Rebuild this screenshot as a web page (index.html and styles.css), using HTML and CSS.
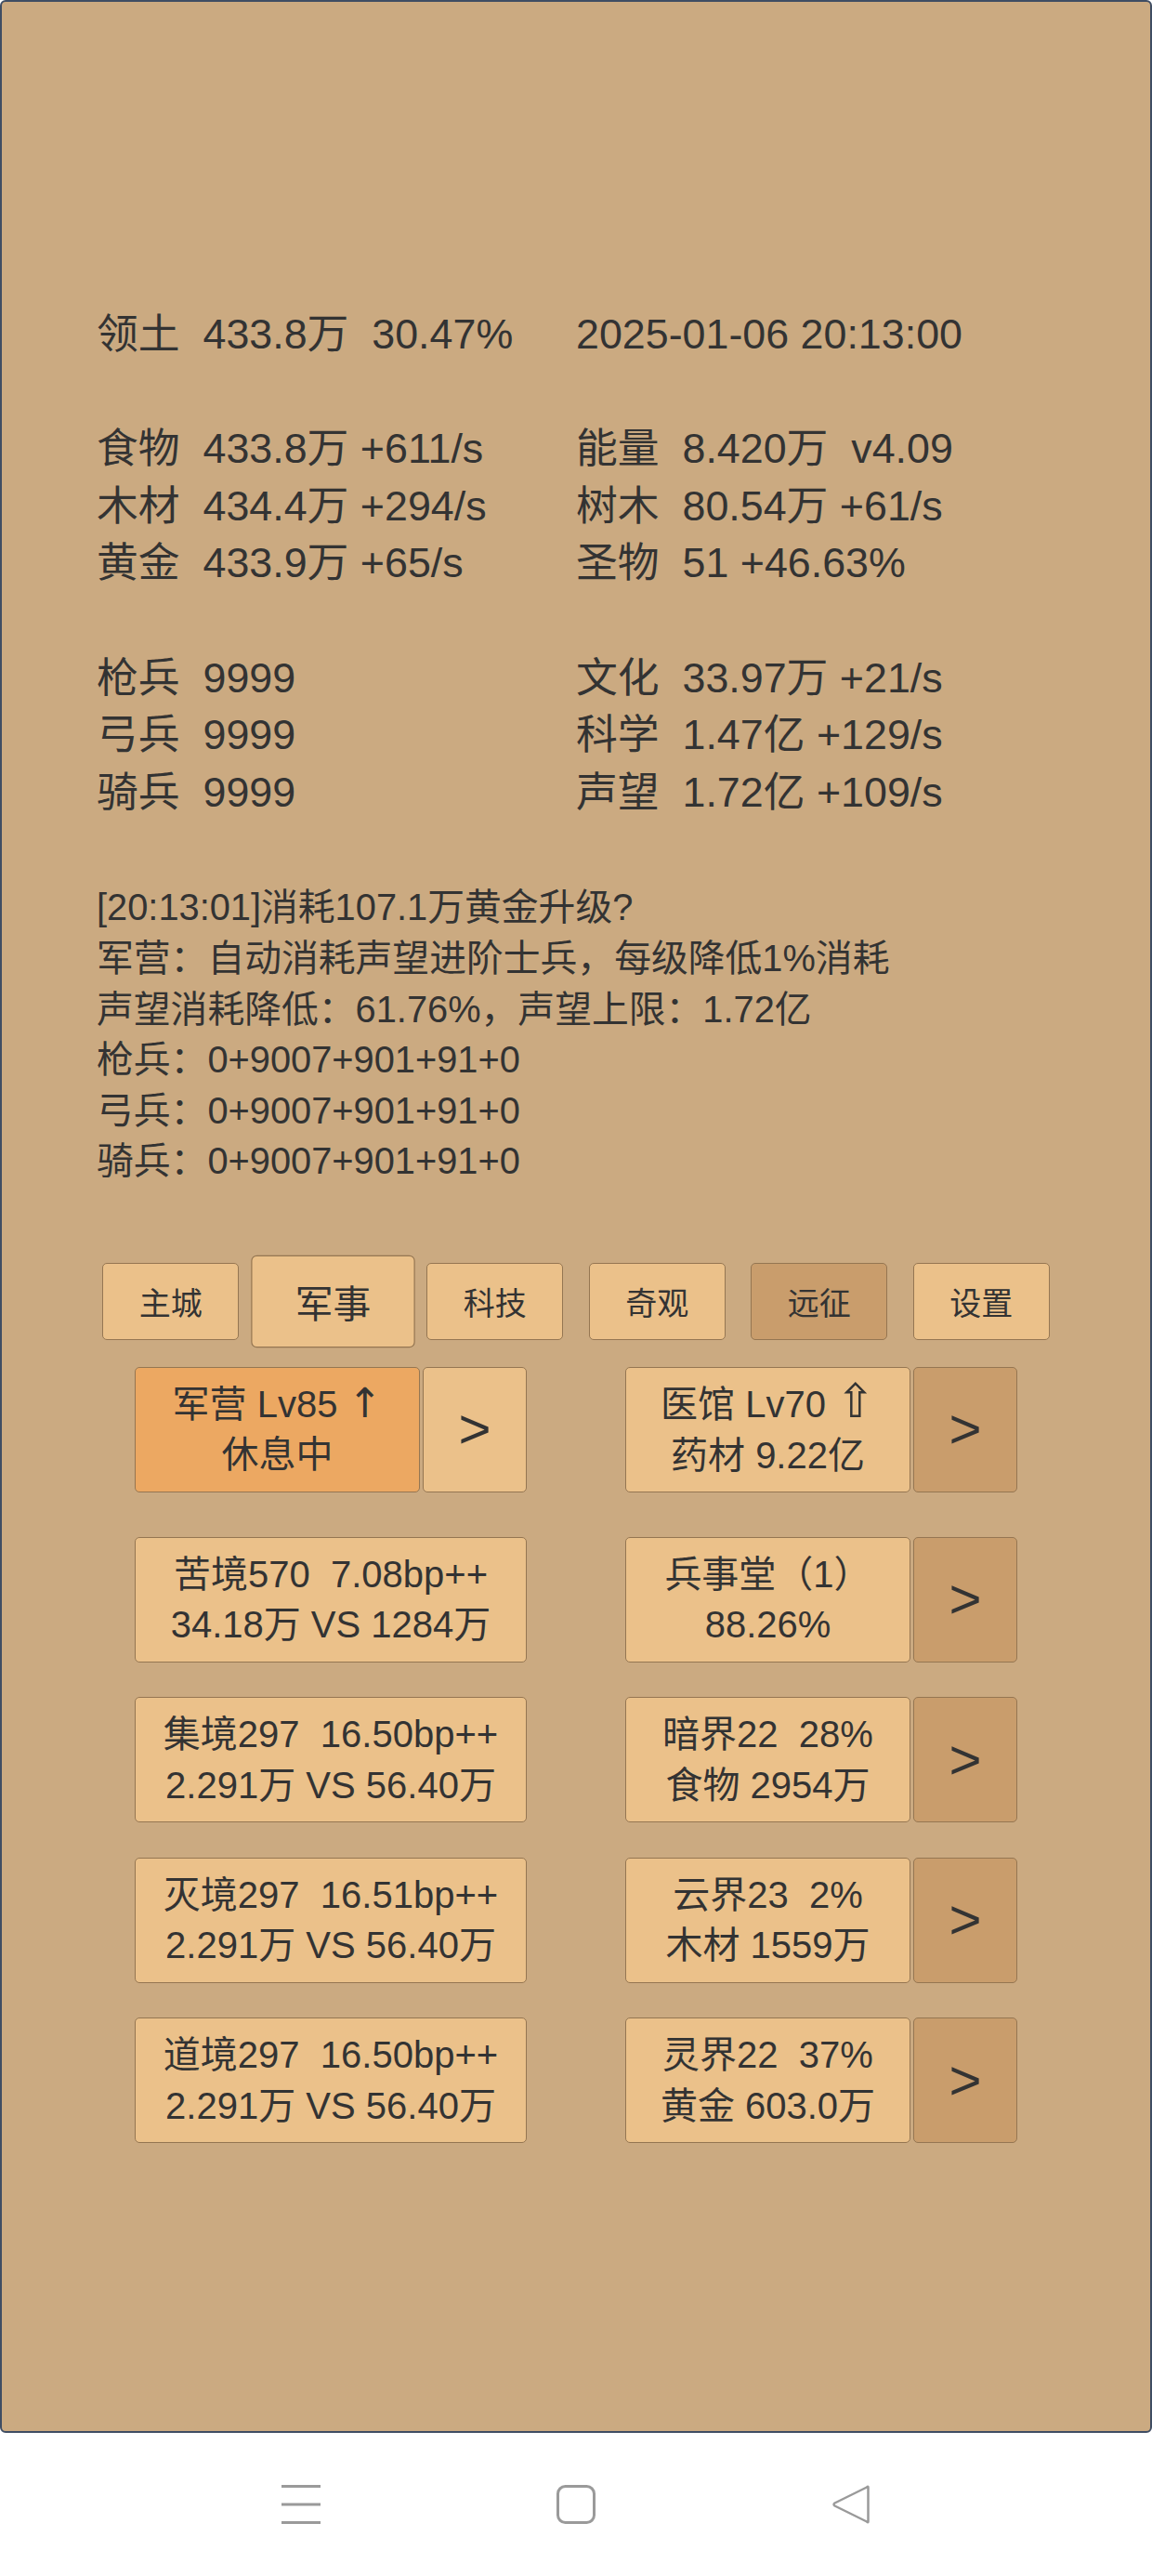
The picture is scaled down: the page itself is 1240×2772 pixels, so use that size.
FILE: index.html
```html
<!DOCTYPE html>
<html lang="zh-CN">
<head>
    <meta charset="UTF-8">
    <meta name="viewport" content="width=device-width, initial-scale=1.0">
    <title>领土</title>
    <link rel="stylesheet" href="styles.css">
</head>
<body>
    <div class="screen">
        <div class="stats">
            <div class="group">
                <div class="row"><span class="cell">领土  433.8万  30.47%</span><span class="cell">2025-01-06 20:13:00</span></div>
            </div>
            <div class="group">
                <div class="row"><span class="cell">食物  433.8万 +611/s</span><span class="cell">能量  8.420万  v4.09</span></div>
                <div class="row"><span class="cell">木材  434.4万 +294/s</span><span class="cell">树木  80.54万 +61/s</span></div>
                <div class="row"><span class="cell">黄金  433.9万 +65/s</span><span class="cell">圣物  51 +46.63%</span></div>
            </div>
            <div class="group">
                <div class="row"><span class="cell">枪兵  9999</span><span class="cell">文化  33.97万 +21/s</span></div>
                <div class="row"><span class="cell">弓兵  9999</span><span class="cell">科学  1.47亿 +129/s</span></div>
                <div class="row"><span class="cell">骑兵  9999</span><span class="cell">声望  1.72亿 +109/s</span></div>
            </div>
        </div>

        <div class="log">
            <p>[20:13:01]消耗107.1万黄金升级?</p>
            <p>军营：自动消耗声望进阶士兵，每级降低1%消耗</p>
            <p>声望消耗降低：61.76%，声望上限：1.72亿</p>
            <p>枪兵：0+9007+901+91+0</p>
            <p>弓兵：0+9007+901+91+0</p>
            <p>骑兵：0+9007+901+91+0</p>
        </div>

        <div class="tabs">
            <button class="tab">主城</button>
            <button class="tab active">军事</button>
            <button class="tab">科技</button>
            <button class="tab">奇观</button>
            <button class="tab dark">远征</button>
            <button class="tab">设置</button>
        </div>

        <div class="buildings">
            <div class="slot first">
                <button class="btn orange">军营 Lv85 <span class="sym">↑</span><br>休息中</button>
                <button class="arrow">&gt;</button>
            </div>
            <div class="slot first">
                <button class="btn">医馆 Lv70 <span class="sym big">⇧</span><br>药材 9.22亿</button>
                <button class="arrow dark">&gt;</button>
            </div>

            <div class="slot">
                <button class="btn">苦境570  7.08bp++<br>34.18万 VS 1284万</button>
            </div>
            <div class="slot">
                <button class="btn">兵事堂（1）<br>88.26%</button>
                <button class="arrow dark">&gt;</button>
            </div>

            <div class="slot">
                <button class="btn">集境297  16.50bp++<br>2.291万 VS 56.40万</button>
            </div>
            <div class="slot">
                <button class="btn">暗界22  28%<br>食物 2954万</button>
                <button class="arrow dark">&gt;</button>
            </div>

            <div class="slot">
                <button class="btn">灭境297  16.51bp++<br>2.291万 VS 56.40万</button>
            </div>
            <div class="slot">
                <button class="btn">云界23  2%<br>木材 1559万</button>
                <button class="arrow dark">&gt;</button>
            </div>

            <div class="slot">
                <button class="btn">道境297  16.50bp++<br>2.291万 VS 56.40万</button>
            </div>
            <div class="slot">
                <button class="btn">灵界22  37%<br>黄金 603.0万</button>
                <button class="arrow dark">&gt;</button>
            </div>
        </div>
    </div>

    <div class="navbar">
        <svg class="nav-icon" viewBox="0 0 42 42" width="42" height="42">
            <rect x="0" y="0" width="42" height="3" fill="#9a9a9a"/>
            <rect x="0" y="19.5" width="42" height="3" fill="#9a9a9a"/>
            <rect x="0" y="39" width="42" height="3" fill="#9a9a9a"/>
        </svg>
        <svg class="nav-icon" viewBox="0 0 42 42" width="42" height="42">
            <rect x="1.5" y="1.5" width="39" height="39" rx="8" fill="none" stroke="#9a9a9a" stroke-width="3"/>
        </svg>
        <svg class="nav-icon" viewBox="0 0 42 42" width="42" height="42">
            <path d="M39.5 2.5 L39.5 39.5 Q39.5 41 38 39.5 L3.5 22.5 Q1.5 21 3.5 19.5 L38 2.5 Q39.5 1 39.5 2.5 Z" fill="none" stroke="#9a9a9a" stroke-width="2.5" stroke-linejoin="round"/>
        </svg>
    </div>
</body>
</html>
```

FILE: styles.css
```css
body {
    margin: 0;
    font-family: "Liberation Sans", "Noto Sans CJK SC", sans-serif;
    color: #333;
    background: #fff;
}
.screen {
    box-sizing: border-box;
    height: 2618px;
    padding-top: 327px;
    background-color: #cbaa81;
    border: 2px solid #3f4d63;
    border-radius: 6px;
}
.stats {
    padding-left: 102px;
    font-size: 44.8px;
    line-height: 61.6px;
}
.group {
    margin-bottom: 61.6px;
}
.group:last-child {
    margin-bottom: 0;
}
.row {
    display: flex;
}
.cell {
    white-space: pre;
}
.cell:first-child {
    width: 516px;
}
.log {
    margin-top: 66px;
    padding-left: 102px;
    font-size: 39.8px;
    line-height: 54.6px;
}
.log p {
    margin: 0;
}
.tabs {
    display: flex;
    justify-content: center;
    gap: 27.5px;
    margin-top: 82px;
}
.tab {
    box-sizing: border-box;
    width: 147px;
    height: 83px;
    padding: 0;
    font-family: inherit;
    font-size: 34px;
    color: #333;
    background-color: #ebc18a;
    border: 1.5px solid #957652;
    border-radius: 5px;
}
.tab.active {
    transform: scale(1.2);
}
.tab.dark {
    background-color: #c99d6c;
}
.buildings {
    display: grid;
    grid-template-columns: 422px 422px;
    justify-content: center;
    column-gap: 106px;
    row-gap: 37.5px;
    margin-top: 29px;
}
.slot {
    display: flex;
    gap: 3px;
    height: 135px;
}
.slot.first {
    margin-bottom: 10.5px;
}
.btn, .arrow {
    box-sizing: border-box;
    height: 135px;
    padding: 0;
    font-family: inherit;
    font-size: 40px;
    line-height: 54.6px;
    color: #333;
    white-space: pre;
    background-color: #ebc18a;
    border: 1.5px solid #957652;
    border-radius: 5px;
}
.btn {
    flex: 1;
}
.btn.orange {
    background-color: #eca862;
}
.sym {
    font-family: "DejaVu Sans", sans-serif;
    font-size: 1.1em;
    line-height: 1;
}
.sym.big {
    font-size: 1.25em;
}
.arrow {
    width: 112px;
    font-size: 60px;
}
.arrow.dark {
    background-color: #c99d6c;
}
.navbar {
    display: flex;
    justify-content: center;
    align-items: center;
    gap: 254px;
    height: 154px;
}
```
